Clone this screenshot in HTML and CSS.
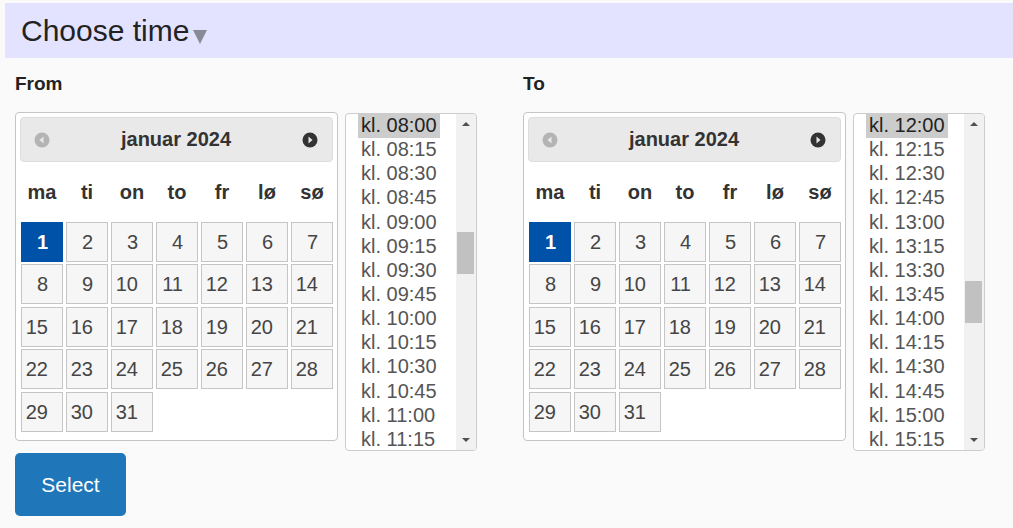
FILE: index.html
```html
<!DOCTYPE HTML>
<html>
<head>
<meta charset="utf-8">
<link rel="stylesheet" href="styles.css">
</head>
<body>
<div class="topbar">
  <h1 class="title">Choose time<span class="caret"></span></h1>
</div>

<div class="picker">
  <div class="side">
    <h2 class="side-label">From</h2>
    <div class="side-body">
      <div class="cal">
        <div class="cal-head">
          <span class="nav nav-prev">
            <svg width="16" height="16" viewBox="0 0 16 16"><circle cx="8" cy="8" r="7.5" fill="#b4b4b4"/><path d="M9.5 4.5 L5.5 8 L9.5 11.5 Z" fill="#e8e8e8"/></svg>
          </span>
          <span class="cal-title">januar 2024</span>
          <span class="nav nav-next">
            <svg width="16" height="16" viewBox="0 0 16 16"><circle cx="8" cy="8" r="7.5" fill="#333"/><path d="M6.5 4.5 L10.5 8 L6.5 11.5 Z" fill="#e8e8e8"/></svg>
          </span>
        </div>
        <div class="cal-grid">
          <span class="dname">ma</span><span class="dname">ti</span><span class="dname">on</span><span class="dname">to</span><span class="dname">fr</span><span class="dname">lø</span><span class="dname">sø</span>
          <a class="day day-active">1</a><a class="day">2</a><a class="day">3</a><a class="day">4</a><a class="day">5</a><a class="day">6</a><a class="day">7</a>
          <a class="day">8</a><a class="day">9</a><a class="day">10</a><a class="day">11</a><a class="day">12</a><a class="day">13</a><a class="day">14</a>
          <a class="day">15</a><a class="day">16</a><a class="day">17</a><a class="day">18</a><a class="day">19</a><a class="day">20</a><a class="day">21</a>
          <a class="day">22</a><a class="day">23</a><a class="day">24</a><a class="day">25</a><a class="day">26</a><a class="day">27</a><a class="day">28</a>
          <a class="day">29</a><a class="day">30</a><a class="day">31</a>
        </div>
      </div>
      <div class="times">
        <div class="time-list">
          <span class="opt opt-sel">kl. 08:00</span>
          <span class="opt">kl. 08:15</span>
          <span class="opt">kl. 08:30</span>
          <span class="opt">kl. 08:45</span>
          <span class="opt">kl. 09:00</span>
          <span class="opt">kl. 09:15</span>
          <span class="opt">kl. 09:30</span>
          <span class="opt">kl. 09:45</span>
          <span class="opt">kl. 10:00</span>
          <span class="opt">kl. 10:15</span>
          <span class="opt">kl. 10:30</span>
          <span class="opt">kl. 10:45</span>
          <span class="opt">kl. 11:00</span>
          <span class="opt">kl. 11:15</span>
        </div>
        <div class="sbar">
          <span class="sbar-btn"><span class="arr-up"></span></span>
          <div class="sbar-track"><div class="thumb" style="margin-top:98px"></div></div>
          <span class="sbar-btn"><span class="arr-down"></span></span>
        </div>
      </div>
    </div>
  </div>

  <div class="side">
    <h2 class="side-label">To</h2>
    <div class="side-body">
      <div class="cal">
        <div class="cal-head">
          <span class="nav nav-prev">
            <svg width="16" height="16" viewBox="0 0 16 16"><circle cx="8" cy="8" r="7.5" fill="#b4b4b4"/><path d="M9.5 4.5 L5.5 8 L9.5 11.5 Z" fill="#e8e8e8"/></svg>
          </span>
          <span class="cal-title">januar 2024</span>
          <span class="nav nav-next">
            <svg width="16" height="16" viewBox="0 0 16 16"><circle cx="8" cy="8" r="7.5" fill="#333"/><path d="M6.5 4.5 L10.5 8 L6.5 11.5 Z" fill="#e8e8e8"/></svg>
          </span>
        </div>
        <div class="cal-grid">
          <span class="dname">ma</span><span class="dname">ti</span><span class="dname">on</span><span class="dname">to</span><span class="dname">fr</span><span class="dname">lø</span><span class="dname">sø</span>
          <a class="day day-active">1</a><a class="day">2</a><a class="day">3</a><a class="day">4</a><a class="day">5</a><a class="day">6</a><a class="day">7</a>
          <a class="day">8</a><a class="day">9</a><a class="day">10</a><a class="day">11</a><a class="day">12</a><a class="day">13</a><a class="day">14</a>
          <a class="day">15</a><a class="day">16</a><a class="day">17</a><a class="day">18</a><a class="day">19</a><a class="day">20</a><a class="day">21</a>
          <a class="day">22</a><a class="day">23</a><a class="day">24</a><a class="day">25</a><a class="day">26</a><a class="day">27</a><a class="day">28</a>
          <a class="day">29</a><a class="day">30</a><a class="day">31</a>
        </div>
      </div>
      <div class="times">
        <div class="time-list">
          <span class="opt opt-sel">kl. 12:00</span>
          <span class="opt">kl. 12:15</span>
          <span class="opt">kl. 12:30</span>
          <span class="opt">kl. 12:45</span>
          <span class="opt">kl. 13:00</span>
          <span class="opt">kl. 13:15</span>
          <span class="opt">kl. 13:30</span>
          <span class="opt">kl. 13:45</span>
          <span class="opt">kl. 14:00</span>
          <span class="opt">kl. 14:15</span>
          <span class="opt">kl. 14:30</span>
          <span class="opt">kl. 14:45</span>
          <span class="opt">kl. 15:00</span>
          <span class="opt">kl. 15:15</span>
        </div>
        <div class="sbar">
          <span class="sbar-btn"><span class="arr-up"></span></span>
          <div class="sbar-track"><div class="thumb" style="margin-top:147px"></div></div>
          <span class="sbar-btn"><span class="arr-down"></span></span>
        </div>
      </div>
    </div>
  </div>

  <div class="actions">
    <button class="select-btn">Select</button>
  </div>
</div>
</body>
</html>
```

FILE: styles.css
```css
body {
  margin: 0;
  background-color: #fafafa;
  font-family: "Liberation Sans", Arial, sans-serif;
  color: #333;
}
.topbar {
  margin: 3px 0 0 5px;
  height: 55px;
  background-color: #e3e3ff;
  display: flex;
  align-items: center;
}
.title {
  margin: 0 0 0 16px;
  font-size: 30px;
  font-weight: normal;
  color: #222;
}
.caret {
  display: inline-block;
  margin-left: 4px;
  border-left: 7px solid transparent;
  border-right: 7px solid transparent;
  border-top: 14px solid #8a8a96;
  vertical-align: -3px;
}
.picker {
  display: grid;
  grid-template-columns: 462px 462px;
  column-gap: 46px;
  padding: 0 15px;
}
.side-label {
  margin: 15px 0 17px 0;
  font-size: 19px;
  line-height: 22px;
  font-weight: bold;
  color: #222;
}
.side-body {
  display: flex;
  align-items: flex-start;
  gap: 7px;
}
.cal {
  width: 313px;
  padding: 4px 4px 8px 4px;
  background-color: #fff;
  border: 1px solid #c5c5c5;
  border-radius: 4px;
}
.cal-head {
  height: 43px;
  display: flex;
  align-items: center;
  justify-content: space-between;
  padding: 0 14px 0 13px;
  background-color: #e9e9e9;
  border: 1px solid #dddddd;
  border-radius: 4px;
}
.nav {
  display: flex;
}
.cal-title {
  font-size: 20px;
  font-weight: bold;
  color: #333;
}
.cal-grid {
  display: grid;
  grid-template-columns: repeat(7, 42px);
  grid-template-rows: 57.6px repeat(5, 40px);
  column-gap: 3px;
  row-gap: 2.4px;
  margin-left: 1px;
}
.dname {
  font-size: 20px;
  font-weight: bold;
  color: #333;
  text-align: center;
  padding-top: 4px;
  line-height: 53.6px;
}
.day {
  box-sizing: border-box;
  height: 40px;
  border: 1px solid #c5c5c5;
  background-color: #f6f6f6;
  color: #454545;
  font-size: 20px;
  line-height: 38px;
  text-align: right;
  padding-right: 14px;
}
.day-active {
  background-color: #0051a8;
  border-color: #0051a8;
  color: #fff;
  font-weight: bold;
}
.times {
  margin-top: 1px;
  width: 131px;
  height: 336px;
  display: flex;
  background-color: #fff;
  border: 1px solid #cccccc;
  border-radius: 4px;
  overflow: hidden;
}
.time-list {
  flex: 1;
  display: flex;
  flex-direction: column;
  align-items: flex-start;
  padding-left: 12px;
  overflow: hidden;
}
.opt {
  flex: none;
  height: 24.15px;
  line-height: 23px;
  padding: 0 3px;
  font-size: 20px;
  color: #555;
}
.opt-sel {
  background-color: #cccccc;
  color: #222;
}
.sbar {
  width: 20px;
  display: flex;
  flex-direction: column;
  background-color: #f1f1f1;
}
.sbar-btn {
  height: 20px;
  display: flex;
  align-items: center;
  justify-content: center;
}
.arr-up {
  border-left: 4px solid transparent;
  border-right: 4px solid transparent;
  border-bottom: 4px solid #505050;
}
.arr-down {
  border-left: 4px solid transparent;
  border-right: 4px solid transparent;
  border-top: 4px solid #505050;
}
.sbar-track {
  flex: 1;
}
.thumb {
  height: 42px;
  margin-left: 1px;
  margin-right: 2px;
  background-color: #c1c1c1;
}
.actions {
  grid-column: 1 / 3;
}
.select-btn {
  margin-top: 2px;
  width: 111px;
  height: 63px;
  border: none;
  border-radius: 5px;
  background-color: #1f77b9;
  color: #fff;
  font-family: "Liberation Sans", Arial, sans-serif;
  font-size: 21px;
  cursor: pointer;
}
```
